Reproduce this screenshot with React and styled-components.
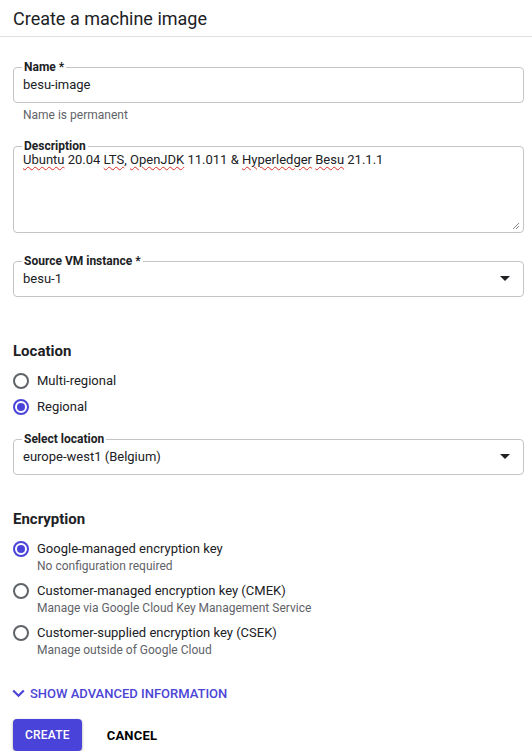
import styled, { createGlobalStyle } from 'styled-components';

const Global = createGlobalStyle`
  body {
    margin: 0;
    background: #fff;
    font-family: Roboto, 'Liberation Sans', sans-serif;
    color: #202124;
  }
`;

const Page = styled.div`
  width: 532px;
`;

const Header = styled.div`
  height: 36px;
  border-bottom: 1px solid #e0e0e0;
  padding: 0 13px;
  display: flex;
  align-items: center;
  h1 {
    margin: 0;
    font-size: 18px;
    font-weight: 400;
    color: #202124;
  }
`;

const Body = styled.div`
  padding: 23px 8px 0 13px;
  display: flex;
  flex-direction: column;
`;

const Field = styled.fieldset`
  margin: ${({ mt }) => mt || 0}px 0 0;
  padding: 0 13px 0 9px;
  border: 1px solid #c4c4c4;
  border-radius: 4px;
  min-width: 0;
  legend {
    padding: 0 2px;
    margin-left: -1px;
    font-size: 12px;
    font-weight: 700;
    line-height: 14px;
    color: #202124;
  }
`;

const Value = styled.div`
  box-sizing: border-box;
  display: flex;
  justify-content: space-between;
  height: ${({ h }) => h || 28}px;
  align-items: ${({ top }) => (top ? 'flex-start' : 'center')};
  padding-bottom: ${({ top }) => (top ? 0 : 7)}px;
  font-size: 13px;
  line-height: ${({ top }) => (top ? 14 : 16)}px;
  color: #202124;
  position: relative;
`;

const Squiggle = styled.span`
  text-decoration: underline wavy #d93025;
  text-decoration-thickness: 1px;
  text-underline-offset: 2px;
`;

const Resize = styled.svg`
  position: absolute;
  right: -10px;
  bottom: 2px;
`;

const Helper = styled.div`
  font-size: 12px;
  line-height: 14px;
  color: #5f6368;
  padding: 5px 0 0 10px;
`;

const Section = styled.h2`
  margin: ${({ mt }) => mt || 0}px 0 0;
  font-size: 15px;
  font-weight: 700;
  color: #202124;
`;

const RadioRow = styled.div`
  display: flex;
  align-items: flex-start;
  gap: 8px;
  margin-top: ${({ mt }) => mt || 0}px;
`;

const Circle = styled.span`
  flex: none;
  width: 16px;
  height: 16px;
  box-sizing: border-box;
  border-radius: 50%;
  border: 2px solid ${({ on }) => (on ? '#4a43d9' : '#5f6368')};
  display: flex;
  align-items: center;
  justify-content: center;
  &::after {
    content: '';
    width: 8px;
    height: 8px;
    border-radius: 50%;
    background: ${({ on }) => (on ? '#4a43d9' : 'transparent')};
  }
`;

const RadioText = styled.div`
  font-size: 13px;
  line-height: 16px;
  color: #202124;
  small {
    display: block;
    font-size: 12px;
    line-height: 16px;
    color: #5f6368;
    margin-top: 1px;
  }
`;

const Advanced = styled.div`
  display: flex;
  align-items: center;
  gap: 5px;
  color: #4b45d6;
  font-size: 13px;
  font-weight: 500;
  margin-top: 28px;
  margin-left: -1px;
`;

const Actions = styled.div`
  display: flex;
  align-items: center;
  gap: 25px;
  margin-top: 18px;
`;

const Button = styled.button`
  height: 32px;
  padding: 0 12px;
  border: none;
  border-radius: 4px;
  font-family: inherit;
  font-size: ${({ primary }) => (primary ? 12 : 13)}px;
  font-weight: ${({ primary }) => (primary ? 500 : 700)};
  letter-spacing: 0.2px;
  background: ${({ primary }) => (primary ? '#4a43d9' : 'transparent')};
  color: ${({ primary }) => (primary ? '#fff' : '#000')};
  box-shadow: ${({ primary }) => (primary ? '0 1px 3px rgba(0,0,0,0.35)' : 'none')};
  ${({ primary }) => !primary && 'padding: 0;'}
`;

const Arrow = () => (
  <svg width="10" height="5" viewBox="0 0 10 5">
    <path d="M0 0h10L5 5z" fill="#202124" />
  </svg>
);

const Radio = ({ on, label, sub, mt }) => (
  <RadioRow mt={mt}>
    <Circle on={on} />
    <RadioText>
      {label}
      {sub && <small>{sub}</small>}
    </RadioText>
  </RadioRow>
);

export default function App() {
  return (
    <Page>
      <Global />
      <Header>
        <h1>Create a machine image</h1>
      </Header>
      <Body>
        <Field>
          <legend>Name *</legend>
          <Value>besu-image</Value>
        </Field>
        <Helper>Name is permanent</Helper>

        <Field mt={17}>
          <legend>Description</legend>
          <Value h={79} top>
            <span>
              <Squiggle>Ubuntu</Squiggle> 20.04 <Squiggle>LTS</Squiggle>, <Squiggle>OpenJDK</Squiggle> 11.011 &amp;{' '}
              <Squiggle>Hyperledger</Squiggle> <Squiggle>Besu</Squiggle> 21.1.1
            </span>
            <Resize width="8" height="8" viewBox="0 0 8 8">
              <path d="M7 1L1 7M7 4L4 7" stroke="#888" strokeWidth="1" />
            </Resize>
          </Value>
        </Field>

        <Field mt={21}>
          <legend>Source VM instance *</legend>
          <Value>
            besu-1
            <Arrow />
          </Value>
        </Field>

        <Section mt={45}>Location</Section>
        <Radio mt={13} label="Multi-regional" />
        <Radio mt={10} on label="Regional" />

        <Field mt={17}>
          <legend>Select location</legend>
          <Value>
            europe-west1 (Belgium)
            <Arrow />
          </Value>
        </Field>

        <Section mt={35}>Encryption</Section>
        <Radio mt={13} on label="Google-managed encryption key" sub="No configuration required" />
        <Radio mt={9} label="Customer-managed encryption key (CMEK)" sub="Manage via Google Cloud Key Management Service" />
        <Radio mt={9} label="Customer-supplied encryption key (CSEK)" sub="Manage outside of Google Cloud" />

        <Advanced>
          <svg width="13" height="9" viewBox="0 0 13 9">
            <path d="M1.2 1.5L6.5 6.8l5.3-5.3" stroke="#4b45d6" strokeWidth="2.2" fill="none" />
          </svg>
          SHOW ADVANCED INFORMATION
        </Advanced>

        <Actions>
          <Button primary>CREATE</Button>
          <Button>CANCEL</Button>
        </Actions>
      </Body>
    </Page>
  );
}
